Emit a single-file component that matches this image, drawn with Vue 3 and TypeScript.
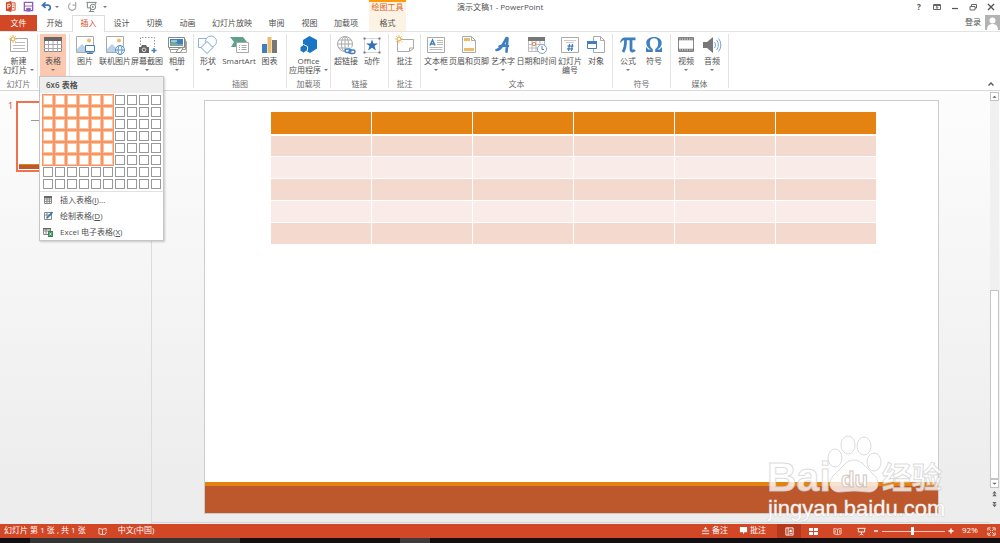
<script setup lang="ts">
import { ref } from 'vue'

interface Tool {
  icon: string
  label: string
  second?: string
  arrow?: boolean
  active?: boolean
}

interface Group {
  key: string
  label: string
  tools: Tool[]
}

const tabs = ['开始', '插入', '设计', '切换', '动画', '幻灯片放映', '审阅', '视图', '加载项', '格式']
const currentTab = ref('插入')

const groups: Group[] = [
  { key: 'slides', label: '幻灯片', tools: [{ icon: 'newSlide', label: '新建', second: '幻灯片', arrow: true }] },
  { key: 'tables', label: '', tools: [{ icon: 'table', label: '表格', arrow: true, active: true }] },
  {
    key: 'images',
    label: '',
    tools: [
      { icon: 'picture', label: '图片' },
      { icon: 'online', label: '联机图片' },
      { icon: 'screenshot', label: '屏幕截图', arrow: true },
      { icon: 'album', label: '相册', arrow: true },
    ],
  },
  {
    key: 'drawings',
    label: '插图',
    tools: [
      { icon: 'shapes', label: '形状', arrow: true },
      { icon: 'smartart', label: 'SmartArt' },
      { icon: 'chart', label: '图表' },
    ],
  },
  { key: 'addins', label: '加载项', tools: [{ icon: 'office', label: 'Office', second: '应用程序', arrow: true }] },
  {
    key: 'links',
    label: '链接',
    tools: [
      { icon: 'link', label: '超链接' },
      { icon: 'action', label: '动作' },
    ],
  },
  { key: 'comments', label: '批注', tools: [{ icon: 'comment', label: '批注' }] },
  {
    key: 'text',
    label: '文本',
    tools: [
      { icon: 'textbox', label: '文本框', arrow: true },
      { icon: 'header', label: '页眉和页脚' },
      { icon: 'wordart', label: '艺术字', arrow: true },
      { icon: 'date', label: '日期和时间' },
      { icon: 'number', label: '幻灯片', second: '编号' },
      { icon: 'object', label: '对象' },
    ],
  },
  {
    key: 'symbols',
    label: '符号',
    tools: [
      { icon: 'pi', label: '公式', arrow: true },
      { icon: 'omega', label: '符号' },
    ],
  },
  {
    key: 'media',
    label: '媒体',
    tools: [
      { icon: 'video', label: '视频', arrow: true },
      { icon: 'audio', label: '音频', arrow: true },
    ],
  },
]

const sun =
  '<path d="M4 0v8M0 4h8M1.200 1.200l5.600 5.600M6.800 1.200l-5.600 5.600" stroke="#eeb95c" stroke-width="1"/><circle cx="4" cy="4" r="1.800" fill="#fff" stroke="#eeb95c"/>'

const icons: Record<string, string> = {
  newSlide: `<path d="M1.500 3.500h17v13h-17z" fill="#fff" stroke="#aaa"/><path d="M6 7.500h10M4 10.500h12M4 13.500h12" stroke="#bbb"/>${sun}`,
  table:
    '<path d="M1.500 2.500h17v14h-17z" fill="#fff" stroke="#888"/><path d="M1 2h18v4H1z" fill="#666"/><path d="M1 9.500h18M1 13.500h18M5.500 6v11M10 6v11M14.500 6v11" stroke="#aaa"/>',
  picture:
    '<path d="M1.500 1.500h17v16h-17z" fill="#fff" stroke="#aaa"/><path d="M2 14l5-5 5 5v3H2z" fill="#b9d0e6"/><circle cx="14" cy="5.500" r="2" fill="#eebb66"/><path d="M10.500 10.500h9v6h-9z" fill="#fff" stroke="#3f7fbf"/><path d="M12 18.500h6M15 17v2" stroke="#3f7fbf"/>',
  online:
    '<path d="M1.500 1.500h17v16h-17z" fill="#fff" stroke="#aaa"/><path d="M2 14l5-5 5 5v3H2z" fill="#b9d0e6"/><circle cx="14" cy="5.500" r="2" fill="#eebb66"/><circle cx="15" cy="15" r="4.500" fill="#fff" stroke="#5b93c9"/><ellipse cx="15" cy="15" rx="2" ry="4.500" fill="none" stroke="#5b93c9"/><path d="M10.500 15h9" stroke="#5b93c9"/>',
  screenshot:
    '<path d="M3.500 10V2.500h14V12" fill="none" stroke="#999" stroke-dasharray="1.500 1.500"/><path d="M2 12h2l1-2h4l1 2h2v6H2z" fill="#666"/><circle cx="7" cy="14.800" r="1.800" fill="#666" stroke="#ddd"/><path d="M17 13v5M14.500 15.500h5" stroke="#3f7fbf" stroke-width="1.500"/>',
  album:
    '<path d="M3.500 6.500h16v11h-16z" fill="#fff" stroke="#aaa"/><path d="M2.500 4.500h16v10h-16z" fill="#fff" stroke="#999"/><path d="M1.500 2.500h16v10h-16z" fill="#fff" stroke="#888"/><path d="M3 4h13v7H3z" fill="#3f7fbf"/><path d="M3 11V8l4-2 4 3h5v2z" fill="#75a99a"/><path d="M4 6h6" stroke="#fff"/><path d="M9 17.500l2.500-4 5-1.500-3 5.500z" fill="#fff" stroke="#888"/>',
  shapes:
    '<path d="M.5 3.500h9v9h-9z" fill="#fff" stroke="#8fb3da"/><circle cx="13" cy="6.500" r="5.500" fill="#fff" stroke="#8fb3da"/><path d="M9 6.500l6 6-6 6-6-6z" fill="#fff" stroke="#6f9fd0"/>',
  smartart:
    '<path d="M1 2h13l4 5h-5v5H2l3-5z" fill="#62a08a"/><path d="M7.500 7.500h12v10h-12z" fill="#fff" stroke="#aaa"/><path d="M10 10.500h1M12.500 10.500h5M10 12.500h1M12.500 12.500h5M10 14.500h1M12.500 14.500h5" stroke="#aaa"/>',
  chart:
    '<path d="M2 9h5v9H2z" fill="#3f7fbf"/><path d="M7.500 2h4v16h-4z" fill="#ebbd6b"/><path d="M12 5h5v13h-5z" fill="#777"/>',
  office: '<path d="M10.500 1l7.500 4v8.500L11 18l-7-4V5z" fill="#1976c5"/><path d="M4.500 9.500l4 2v4l-4 2.500-3.500-2v-4z" fill="#1976c5" stroke="#fff"/>',
  link: '<g fill="none" stroke="#aaa"><circle cx="9" cy="9" r="7.500"/><ellipse cx="9" cy="9" rx="3.500" ry="7.500"/><path d="M1.500 9h15M3 5h12M3 13h12M9 1.500v15"/></g><g fill="#fff" stroke="#fff" stroke-width="3"><rect x="10" y="14" width="9" height="4" rx="2"/></g><g fill="none" stroke="#3f7fbf" stroke-width="1.500"><rect x="9" y="14" width="6" height="3.500" rx="1.700"/><rect x="13" y="15" width="6" height="3.500" rx="1.700"/></g>',
  action:
    '<path d="M2.500 3.500h15v14h-15z" fill="#fff" stroke="#aaa" stroke-dasharray="1 1"/><path d="M1.500 2.500h2v2h-2zM16.500 2.500h2v2h-2zM1.500 16.500h2v2h-2zM16.500 16.500h2v2h-2z" fill="#777"/><path d="M10 4.500l1.500 4H16l-3.500 2.600 1.400 4.300L10 12.800l-3.900 2.600 1.400-4.300L4 8.500h4.500z" fill="#2f73b8"/>',
  comment: `<path d="M2.500 4.500h16v9l-4 3h-12z" fill="#fff" stroke="#aaa"/><path d="M14.500 16v-3h4" fill="none" stroke="#aaa"/>${sun}`,
  textbox:
    '<path d="M1.500 2.500h17v15h-17z" fill="#fff" stroke="#aaa"/><path d="M4 10.500L6.500 5 9 10.500M5 9h3" fill="none" stroke="#3f7fbf" stroke-width="1.500"/><path d="M11 5.500h6M11 7.500h6M11 9.500h6M3.500 12.500h13M3.500 14.500h13" stroke="#bbb"/>',
  header:
    '<path d="M3.500 1.500h9l4 4v12h-13z" fill="#fff" stroke="#aaa"/><path d="M12.500 1.500v4h4" fill="none" stroke="#aaa"/><path d="M5 3h6v3H5zM5 13h10v3H5z" fill="#ebbd6b"/>',
  wordart:
    '<path d="M3.500 15c4 0 7-6 10-12l1 .2-1 13.500M6.500 11.500c3-1 6-1 8.500-.5" fill="none" stroke="#3f7fbf" stroke-width="2.600" stroke-linejoin="round" stroke-linecap="round"/>',
  date: '<path d="M1.500 2.500h16v14h-16z" fill="#fff" stroke="#bbb"/><path d="M1 2h17v4H1z" fill="#777"/><path d="M2 9.500h15M2 13h15M5 6v10M9 6v10M13 6v10" stroke="#bbb"/><path d="M5.500 7.500h3v3h-3z" fill="#fff" stroke="#e88a5c"/><circle cx="15" cy="14" r="4.500" fill="#fff" stroke="#7aa7d3"/><path d="M15 11v3.500h2" fill="none" stroke="#777"/>',
  number:
    '<path d="M1.500 2.500h17v15h-17z" fill="#fff" stroke="#aaa"/><path d="M4 5.500h12M6 7.500h8" stroke="#ccc"/><path d="M9.500 9l-1 7M12.500 9l-1 7M7.500 11.200h6M7 13.800h6" stroke="#3f7fbf" stroke-width="1.200"/>',
  object:
    '<path d="M7.500 1.500h7l4 4v12h-11z" fill="#fff" stroke="#aaa"/><path d="M14.500 1.500v4h4" fill="none" stroke="#aaa"/><path d="M1.500 6.500h9v7h-9z" fill="#fff" stroke="#3f7fbf"/><path d="M1 6h10v3H1z" fill="#3f7fbf"/>',
  pi: '<path d="M2 7.500C3 3.500 5 2.500 7 2.500h10.500v2.700H7C5 5.200 4 5.500 3 7.500z" fill="#3f7fbf"/><path d="M7.500 4.500c.2 5-.5 9-2.500 12.500M13 4.500v9.500c0 2.600 2 2.600 3.800 1" fill="none" stroke="#3f7fbf" stroke-width="2.800"/>',
  omega:
    '<path d="M2 12.500h1.200c.2 1.500.8 2 2 2h1.600C4 12.800 2.300 11 2.300 8c0-3.500 3-6 7.700-6s7.700 2.500 7.700 6c0 3-1.700 4.800-4.500 6.500h1.600c1.200 0 1.800-.5 2-2H18V17h-6.800v-2.700c2-1.500 3-3.300 3-6.300 0-3-1.500-4.800-4.200-4.800S5.800 5 5.800 8c0 3 1 4.800 3 6.300V17H2z" fill="#3f7fbf"/>',
  video:
    '<path d="M2.500 2.500h15v14h-15z" fill="#fff" stroke="#888"/><path d="M2 4h16M2 15h16" stroke="#777" stroke-width="2.500"/><path d="M3.500 4h13M3.500 15h13" stroke="#fff" stroke-dasharray="1.200 1.200" stroke-width="1.200"/>',
  audio:
    '<path d="M1 7h4l6-5v16l-6-5H1z" fill="#777"/><path d="M12.500 7c1.300 1.500 1.300 4.500 0 6M14.500 5c2.400 2.500 2.400 7.500 0 10M16.500 3.500c3 3.500 3 9.500 0 13" fill="none" stroke="#6f9fd0"/>',
}

const pickerColumns = 10
const pickerRows = 8
const picked = ref({ columns: 6, rows: 6 })

const isPicked = (index: number): boolean =>
  (index - 1) % pickerColumns < picked.value.columns && Math.floor((index - 1) / pickerColumns) < picked.value.rows

const pick = (index: number): void => {
  picked.value = { columns: ((index - 1) % pickerColumns) + 1, rows: Math.floor((index - 1) / pickerColumns) + 1 }
}

const zoomLevel = ref(48)
</script>

<template>
  <div class="window">
    <header class="titlebar">
      <div class="quick">
        <svg class="q-app" viewBox="0 0 12 12"><path d="M1 1.500L7 0v12l-6-1.500z" fill="#d24726" /><path d="M7 2h4v8H7z" fill="#fff" stroke="#d24726" /><path d="M8 4.500h2M8 7h2" stroke="#d24726" /><path d="M3 8.500v-5h1.500a1.300 1.300 0 010 2.800H3" fill="none" stroke="#fff" /></svg>
        <button type="button" aria-label="保存"><svg viewBox="0 0 12 12"><path d="M1.500 1.500h9v9h-9z" fill="#fff" stroke="#8a5fb5" stroke-width="1.500" /><path d="M2 5.500h8M4 8h4v3H4z" fill="#8a5fb5" stroke="#8a5fb5" /></svg></button>
        <button type="button" aria-label="撤消"><svg viewBox="0 0 12 12"><path d="M2 4.500h5a2.800 2.800 0 011 5.500M5 1.500l-3.500 3L5 7.500" fill="none" stroke="#3f74b5" stroke-width="1.800" /></svg></button>
        <span class="caret"></span>
        <button type="button" aria-label="恢复"><svg viewBox="0 0 12 12"><path d="M4 2.500a4 4 0 105 1.500M9.500 1v3.500H6" fill="none" stroke="#aaa" stroke-width="1.300" /></svg></button>
        <button type="button" class="present" aria-label="从头开始"><svg viewBox="0 0 12 12"><path d="M.5 1.500h11M1.500 2v5.500h4M10.500 2v2M3 11.500h6M5 8v3" fill="none" stroke="#777" /><circle cx="7.500" cy="6.500" r="3" fill="#fff" stroke="#777" /><path d="M6.700 5L9 6.500 6.700 8z" fill="#5d9b78" /></svg></button>
        <span class="caret"></span>
      </div>
      <div class="context-title">绘图工具</div>
      <h1>演示文稿1 - PowerPoint</h1>
      <div class="window-buttons">
        <button type="button" aria-label="帮助"><b>?</b></button>
        <button type="button" aria-label="功能区显示选项"><svg viewBox="0 0 10 10"><path d="M1.500 2.500h7v5h-7zM1.500 3.500h7M5 7V4.500M3.800 5.700L5 4.500l1.200 1.200" fill="none" stroke="#666" /></svg></button>
        <button type="button" aria-label="最小化"><svg viewBox="0 0 10 10"><path d="M2 6.500h6" stroke="#555" stroke-width="1.200" /></svg></button>
        <button type="button" aria-label="还原"><svg viewBox="0 0 10 10"><path d="M3.500 4V2.500h5v3.500H7M2 4.500h5v3.500H2z" fill="none" stroke="#666" /></svg></button>
        <button type="button" aria-label="关闭"><svg viewBox="0 0 10 10"><path d="M2 2l6 6M8 2L2 8" stroke="#555" stroke-width="1.400" /></svg></button>
      </div>
    </header>

    <nav class="tabs">
      <button type="button" class="file">文件</button>
      <button
        v-for="tab in tabs"
        :key="tab"
        type="button"
        :class="{ current: tab === currentTab, wide: tab.length === 5, three: tab.length === 3, format: tab === '格式' }"
        @click="currentTab = tab"
      >{{ tab }}</button>
      <a class="signin" href="#">登录</a>
      <svg class="avatar" viewBox="0 0 15 15"><path d="M0 0h15v15H0z" fill="#b3b3b3" /><circle cx="7.500" cy="5.500" r="3" fill="#fff" /><path d="M2 15c0-4 2-6 5.500-6s5.500 2 5.500 6z" fill="#fff" /></svg>
    </nav>

    <section class="ribbon">
      <div v-for="group in groups" :key="group.key" class="group" :class="group.key">
        <div class="tools">
          <button v-for="tool in group.tools" :key="tool.icon" type="button" class="tool" :class="{ active: tool.active }">
            <svg viewBox="0 0 20 20" v-html="icons[tool.icon]"></svg>
            <span>{{ tool.label }}</span>
            <span v-if="tool.second || tool.arrow" class="second">{{ tool.second }}<i v-if="tool.arrow" class="caret"></i></span>
          </button>
        </div>
        <div v-if="group.label" class="group-label">{{ group.label }}</div>
        <div v-if="group.key === 'tables'" class="menu">
          <div class="menu-title">{{ picked.columns }}x{{ picked.rows }} 表格</div>
          <div class="picker">
            <button
              v-for="n in pickerColumns * pickerRows"
              :key="n"
              type="button"
              :class="{ on: isPicked(n) }"
              :aria-label="`单元格 ${n}`"
              @click="pick(n)"
            ></button>
          </div>
          <div class="menu-items">
            <button type="button">
              <svg viewBox="0 0 10 10"><path d="M1.500 1.500h7v7h-7zM1.500 4h7M1.500 6.300h7M4 2v6.500M6.300 2v6.500" fill="#fff" stroke="#888" /><path d="M1 1h8v2H1z" fill="#666" /></svg>
              <span>插入表格(<u>I</u>)...</span>
            </button>
            <button type="button">
              <svg viewBox="0 0 10 10"><path d="M1.500 1.500h7v7h-7zM1.500 4h7M4 2v6.500" fill="#fff" stroke="#888" /><path d="M4 7l5.500-6" stroke="#3179bd" stroke-width="1.800" /></svg>
              <span>绘制表格(<u>D</u>)</span>
            </button>
            <button type="button">
              <svg viewBox="0 0 10 10"><path d="M.5 1.500h7v6h-7zM.5 4h7M3 2v5.500" fill="#fff" stroke="#888" /><path d="M0 1h8v1.500H0z" fill="#666" /><path d="M5 4h5v6H5z" fill="#2f8556" /><path d="M6.300 5.500l2.400 3M8.700 5.500l-2.400 3" stroke="#fff" stroke-width=".8" /></svg>
              <span>Excel 电子表格(<u>X</u>)</span>
            </button>
          </div>
        </div>
      </div>
      <button type="button" class="collapse" aria-label="折叠功能区"><svg viewBox="0 0 8 8"><path d="M1.500 5.500L4 3l2.500 2.500" fill="none" stroke="#555" stroke-width="1.400" /></svg></button>
    </section>

    <main class="workspace">
      <aside class="thumbs">
        <span class="thumb-number">1</span>
        <div class="thumb"><div class="thumb-line"></div><div class="thumb-foot"></div></div>
      </aside>
      <div class="stage">
        <article class="slide">
          <table>
            <thead>
              <tr><th v-for="c in picked.columns" :key="c" scope="col"></th></tr>
            </thead>
            <tbody>
              <tr v-for="r in picked.rows - 1" :key="r"><td v-for="c in picked.columns" :key="c"></td></tr>
            </tbody>
          </table>
          <div class="slide-foot"></div>
        </article>
      </div>
      <div class="scroll">
        <button type="button" aria-label="向上滚动"><svg viewBox="0 0 8 8"><path d="M1.500 5.500L4 3l2.500 2.500z" fill="#666" /></svg></button>
        <div class="track"><div class="handle"></div></div>
        <button type="button" aria-label="向下滚动"><svg viewBox="0 0 8 8"><path d="M1.500 3L4 5.500 6.500 3z" fill="#666" /></svg></button>
        <button type="button" class="jump" aria-label="上一张幻灯片"><svg viewBox="0 0 8 8"><path d="M1.500 4L4 1l2.500 3zM1.500 7L4 4l2.500 3z" fill="#666" /></svg></button>
        <button type="button" class="jump" aria-label="下一张幻灯片"><svg viewBox="0 0 8 8"><path d="M1.500 1L4 4l2.500-3zM1.500 4L4 7l2.500-3z" fill="#666" /></svg></button>
      </div>
    </main>

    <footer class="status">
      <span class="count">幻灯片 第 1 张 , 共 1 张</span>
      <svg class="book" viewBox="0 0 10 10"><path d="M5 2.500L1 1.500v6l4 1 1-.5M5 2.500v6M5 2.500l4-1v3M6 8l1 1 2.500-3.500" fill="none" stroke="#fbe0d8" /></svg>
      <span>中文(中国)</span>
      <div class="status-right">
        <button type="button" class="labelled"><svg viewBox="0 0 10 10"><path d="M5 1l2 2.500H3z" fill="#fff" /><path d="M1 5.500h8M1 8.500h8" stroke="#fff" /></svg>备注</button>
        <button type="button" class="labelled"><svg viewBox="0 0 10 10"><path d="M1 1h8v6H6L4.500 9.500V7H1z" fill="#fff" /></svg>批注</button>
        <button type="button" class="view selected" aria-label="普通视图"><svg viewBox="0 0 10 10"><path d="M1 1h8v8H1zM3.500 1v8" fill="none" stroke="#fff" /><path d="M5 3h2.500v2.500H5zM5 6.500h3v1H5z" fill="#fff" /></svg></button>
        <button type="button" class="view" aria-label="幻灯片浏览"><svg viewBox="0 0 10 10"><path d="M0 1h4.500v3.500H0zM5.500 1H10v3.500H5.500zM0 5.500h4.500V9H0zM5.500 5.500H10V9H5.500z" fill="#fff" /></svg></button>
        <button type="button" class="view" aria-label="阅读视图"><svg viewBox="0 0 10 10"><path d="M1 1.500l4 1 4-1v6l-4 1-4-1zM5 2.500v6M2.500 3.500v3M7.500 3.500v3" fill="none" stroke="#fbd5ca" /></svg></button>
        <button type="button" class="view" aria-label="幻灯片放映"><svg viewBox="0 0 10 10"><path d="M.5 1.500h9M1.500 2v3.500h7V2M5 5.500V8M3 9l2-1.500L7 9" fill="none" stroke="#fff" /></svg></button>
        <button type="button" class="step" aria-label="缩小"><svg viewBox="0 0 6 6"><path d="M1 3h4" stroke="#fff" stroke-width="1.400" /></svg></button>
        <input v-model="zoomLevel" type="range" min="0" max="100" aria-label="缩放" />
        <button type="button" class="step" aria-label="放大"><svg viewBox="0 0 6 6"><path d="M.5 3h5M3 .5v5" stroke="#fff" stroke-width="1.400" /></svg></button>
        <span class="percent">92%</span>
        <button type="button" class="fit" aria-label="适应窗口"><svg viewBox="0 0 10 10"><path d="M1 4V1h3M6 1h3v3M9 6v3H6M4 9H1V6M2.500 2.500l1.800 1.800M7.500 2.500L5.700 4.300M7.500 7.500L5.700 5.700M2.500 7.500l1.800-1.800" fill="none" stroke="#fff" /></svg></button>
      </div>
    </footer>
    <div class="taskbar"><i></i><i></i><i></i><i></i></div>

    <svg class="watermark" viewBox="0 0 184 90">
      <g class="wm-shape">
        <ellipse cx="69" cy="24" rx="7" ry="9" />
        <ellipse cx="82" cy="11" rx="7" ry="9" />
        <ellipse cx="98" cy="12" rx="7" ry="9" />
        <ellipse cx="108" cy="28" rx="7" ry="9" />
        <path d="M88 26c-8 0-12 8-19 14-9 8-5 18 4 18 6 0 9-1 15-1s9 1 15 1c9 0 13-10 4-18-7-6-11-14-19-14z" />
        <text x="1" y="57" class="wm-latin">Bai</text>
        <text x="116" y="54" class="wm-cjk">经验</text>
      </g>
      <text x="75" y="53" class="wm-du">du</text>
      <text x="2" y="82" class="wm-url">jingyan.baidu.com</text>
    </svg>
  </div>
</template>

<style>
body {
  margin: 0;
}
</style>

<style scoped>
.window {
  position: relative;
  display: flex;
  flex-direction: column;
  height: 100vh;
  overflow: hidden;
  background: #fff;
  color: #505050;
  font: 8px/9px "Open Sans", "Noto Sans CJK SC", sans-serif;
}
.window * {
  box-sizing: border-box;
}
button {
  padding: 0;
  border: 0;
  background: none;
  color: inherit;
  font: inherit;
  white-space: nowrap;
}
svg {
  display: block;
  flex: none;
}
.caret {
  display: inline-block;
  border: 2px solid transparent;
  border-top-color: #777;
  border-bottom: 0;
}

/* title bar */
.titlebar {
  display: flex;
  height: 15px;
  flex: none;
}
.quick {
  display: flex;
  align-items: center;
  gap: 5px;
  width: 369px;
  padding: 0 0 2px 5px;
}
.quick svg {
  width: 11px;
  height: 11px;
}
.quick .q-app {
  margin-right: 2px;
}
.quick button {
  margin-right: 2px;
}
.quick button + .caret {
  margin-left: -4px;
}
.quick .caret + button {
  margin-left: 3px;
}
.quick .present {
  margin: 0 5px 0 1px;
}
.context-title {
  width: 37px;
  border-top: 2px solid #ff9a0a;
  background: #fdf3e4;
  color: #d9661f;
  line-height: 10px;
  text-align: center;
  white-space: nowrap;
}
h1 {
  flex: 1;
  margin: 0;
  padding-left: 51px;
  font-size: 8px;
  font-weight: 400;
  line-height: 13px;
}
.window-buttons {
  display: flex;
  gap: 8px;
  align-items: center;
  padding: 0 4px 2px 0;
}
.window-buttons button {
  width: 10px;
}
.window-buttons svg {
  width: 10px;
  height: 10px;
}

/* tabs */
.tabs {
  display: flex;
  flex: none;
  height: 17px;
  border-bottom: 1px solid #e3e3e3;
}
.tabs button {
  width: 33px;
  height: 16px;
  padding-bottom: 2px;
}
.tabs .file {
  width: 37px;
  background: #d24726;
  color: #fff;
}
.tabs .file + button {
  width: 35px;
}
.tabs .wide {
  width: 56px;
}
.tabs .three {
  width: 43px;
  padding-right: 3px;
}
.tabs .format {
  width: 37px;
  background: #fdf3e4;
}
.tabs .current {
  height: 17px;
  padding-bottom: 4px;
  border: 1px solid #ddd;
  border-bottom: 0;
  background: #fff;
  color: #d24726;
}
.signin {
  margin-left: auto;
  color: #505050;
  line-height: 14px;
  text-decoration: none;
}
.avatar {
  width: 15px;
  height: 15px;
  margin-left: 4px;
}

/* ribbon */
.ribbon {
  display: flex;
  flex: none;
  height: 59px;
  padding: 2px 0;
  border-bottom: 1px solid #d9d9d9;
}
.group {
  position: relative;
  display: flex;
  flex-direction: column;
  border-right: 1px solid #e4e4e4;
}
.tools {
  display: grid;
  height: 42px;
}
.slides .tools { grid-template-columns: 37px; }
.tables .tools { grid-template-columns: 26px; padding: 0 3px 0 2px; }
.images .tools { grid-template-columns: 30px 30px 34px 26px; padding-right: 3px; }
.drawings .tools { grid-template-columns: 28px 34px 27px; padding-right: 3px; }
.addins .tools { grid-template-columns: 43px; }
.links .tools { grid-template-columns: 30px 22px; padding-right: 5px; }
.comments .tools { grid-template-columns: 31px; }
.text .tools { grid-template-columns: 30px 36px 32px 35px 32px 20px; padding-right: 6px; }
.symbols .tools { grid-template-columns: 30px 22px; padding-right: 5px; }
.media .tools { grid-template-columns: 30px 22px; padding-right: 5px; }
.tool {
  display: flex;
  flex-direction: column;
  align-items: center;
  padding-top: 1px;
}
.tool svg {
  width: 20px;
  height: 20px;
  margin-bottom: 1px;
}
.tool.active {
  background: #fbc9b0;
}
.second {
  display: flex;
  align-items: center;
  gap: 3px;
  height: 9px;
}
.group-label {
  margin-top: 4px;
  color: #707070;
  text-align: center;
}
.collapse {
  align-self: flex-end;
  margin: 0 5px 0 auto;
}
.collapse svg {
  width: 8px;
  height: 8px;
}

/* table menu */
.menu {
  position: absolute;
  top: 42px;
  left: 1px;
  z-index: 2;
  width: 125px;
  border: 1px solid #c6c6c6;
  background: #fff;
  box-shadow: 1px 1px 2px #0003;
}
.menu-title {
  padding-left: 6px;
  background: #eee;
  font-weight: 600;
  line-height: 16px;
}
.picker {
  display: grid;
  grid-template-columns: repeat(10, 10px);
  grid-auto-rows: 10px;
  gap: 2px;
  padding: 2px 3px;
}
.picker button {
  border: 1px solid #999;
  background: #fff;
}
.picker .on {
  border-color: #fbc59b;
  outline: 1px solid #f79468;
}
.menu-items {
  border-top: 1px solid #e1e1e1;
}
.menu-items button {
  display: flex;
  align-items: center;
  gap: 7px;
  width: 100%;
  height: 16px;
  padding: 0 0 1px 3px;
}
.menu-items svg {
  width: 10px;
  height: 10px;
}

/* workspace */
.workspace {
  display: flex;
  flex: 1;
  min-height: 0;
  background: linear-gradient(#fdfdfd, #ededed 90%);
}
.thumbs {
  display: flex;
  gap: 3px;
  width: 152px;
  padding: 10px 8px;
  border-right: 1px solid #dcdcdc;
}
.thumb-number {
  color: #d24726;
  font-size: 9px;
}
.thumb {
  display: flex;
  flex-direction: column;
  justify-content: space-between;
  width: 126px;
  height: 71px;
  padding: 17px 1px 1px;
  border: 2px solid #f0714f;
  background: #fff;
}
.thumb-line {
  margin: 0 12px;
  border-top: 1px solid #999;
}
.thumb-foot {
  height: 5px;
  border-top: 1px solid #e48312;
  background: #bd582c;
}
.stage {
  flex: 1;
  display: flex;
  margin-bottom: 1px;
  padding: 9px 51px 8px 52px;
  border-bottom: 1px solid #d6d6d6;
}
.slide {
  flex: 1;
  display: flex;
  flex-direction: column;
  justify-content: space-between;
  border: 1px solid #ccc;
  background: #fff;
}
table {
  width: calc(100% - 126px);
  margin: 10px 61px 0 65px;
  border-collapse: collapse;
  table-layout: fixed;
}
th,
td {
  height: 22px;
  padding: 0;
  border: 1px solid #fff;
}
th {
  height: 23px;
  border-bottom-width: 2px;
  background: #e48312;
}
td {
  background: #f9ece8;
}
tr:nth-child(odd) td {
  background: #f4d9ce;
}
.slide-foot {
  height: 31px;
  border-top: 4px solid #e48312;
  background: #bd582c;
}
.scroll {
  display: flex;
  flex-direction: column;
  width: 10px;
  padding: 1px 1px 14px 0;
}
.scroll svg {
  width: 7px;
  height: 7px;
  margin: auto;
}
.scroll button {
  height: 9px;
  border: 1px solid #c4c4c4;
  background: #fff;
}
.scroll .jump {
  height: 11px;
  border: 0;
  background: none;
}
.track {
  flex: 1;
  display: flex;
  align-items: flex-end;
  background: #f0f0f0;
}
.handle {
  width: 100%;
  height: 50%;
  border: 1px solid #c4c4c4;
  background: #fff;
}

/* status bar */
.status {
  display: flex;
  align-items: center;
  flex: none;
  height: 14px;
  padding-left: 4px;
  background: #d24726;
  color: #fff;
  line-height: 12px;
}
.status > span {
  height: 14px;
}
.status svg {
  width: 9px;
  height: 9px;
}
.status .book {
  margin: 0 11px 0 12px;
}
.status-right {
  display: flex;
  align-items: center;
  height: 14px;
  margin-left: auto;
  padding-right: 4px;
}
.labelled {
  display: flex;
  align-items: center;
  gap: 2px;
  height: 14px;
  margin-right: 11px;
  padding-bottom: 2px;
}
.view {
  display: grid;
  place-items: center;
  width: 24px;
  height: 14px;
}
.view.selected {
  background: #b5391c;
}
.step svg {
  width: 6px;
  height: 6px;
}
input[type="range"] {
  appearance: none;
  width: 63px;
  height: 10px;
  margin: 0 3px;
  background: linear-gradient(#f5c4b6, #f5c4b6) center / 100% 1px no-repeat;
}
input[type="range"]::-webkit-slider-thumb {
  appearance: none;
  width: 3px;
  height: 8px;
  background: #fff;
}
.percent {
  width: 20px;
  height: 14px;
  margin: 0 5px 0 8px;
}
.taskbar {
  display: grid;
  grid-template-columns: 3fr 21fr 16fr 3fr 57fr;
  flex: none;
  height: 5px;
  background: #120f12;
}
.taskbar i:nth-child(2) {
  background: #343434;
}
.taskbar i:nth-child(4) {
  background: #3c3a3d;
}

/* watermark */
.watermark {
  position: absolute;
  right: 50px;
  bottom: 19px;
  width: 184px;
  height: 90px;
  pointer-events: none;
}
.wm-shape {
  fill: #ffffffc8;
  stroke: #cfcfcfc0;
  stroke-width: 1px;
}
.wm-latin {
  font: bold 41px "Liberation Sans", sans-serif;
}
.wm-cjk {
  font: bold 30px "Noto Sans CJK SC", sans-serif;
}
.wm-du {
  fill: #fff;
  stroke: #d0c4be;
  font: bold 22px "Liberation Sans", sans-serif;
}
.wm-url {
  fill: #fffe;
  stroke: #c4c4c4a0;
  stroke-width: 1px;
  paint-order: stroke;
  font: 22px "Liberation Sans", sans-serif;
}
</style>
